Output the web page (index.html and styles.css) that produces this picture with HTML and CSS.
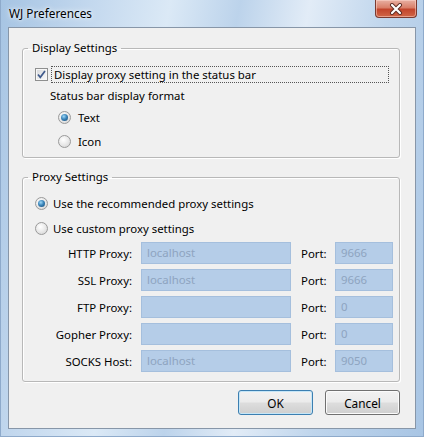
FILE: index.html
```html
<!DOCTYPE html>
<html>
<head>
<meta charset="utf-8">
<title>WJ Preferences</title>
<link rel="stylesheet" href="styles.css">
</head>
<body>
<div class="window">
  <div class="titlebar">
    <span class="title">WJ Preferences</span>
    <div class="close">
      <svg width="14" height="12" viewBox="0 0 14 12">
        <path d="M3 2 L11 10 M11 2 L3 10" stroke="#5b2a22" stroke-width="4" stroke-linecap="round"/>
        <path d="M3 2 L11 10 M11 2 L3 10" stroke="#ffffff" stroke-width="2.2" stroke-linecap="round"/>
      </svg>
    </div>
  </div>
  <div class="client">
    <fieldset class="group group-display">
      <legend>Display Settings</legend>
      <div class="check-row">
        <span class="checkbox">
          <svg width="11" height="11" viewBox="0 0 11 11"><path d="M2 5.5 L4.3 8.3 L9 2" fill="none" stroke="#3f5a8c" stroke-width="1.7"/></svg>
        </span>
        <span class="focus-label">Display proxy setting in the status bar</span>
      </div>
      <div class="sub-label">Status bar display format</div>
      <div class="radio-row indent"><span class="radio on"></span><span>Text</span></div>
      <div class="radio-row indent"><span class="radio"></span><span>Icon</span></div>
    </fieldset>
    <fieldset class="group group-proxy">
      <legend>Proxy Settings</legend>
      <div class="radio-row first"><span class="radio on"></span><span>Use the recommended proxy settings</span></div>
      <div class="radio-row"><span class="radio"></span><span>Use custom proxy settings</span></div>
      <div class="proxy-grid">
        <span class="lbl">HTTP Proxy:</span><div class="field">localhost</div><span class="port-lbl">Port:</span><div class="field">9666</div>
        <span class="lbl">SSL Proxy:</span><div class="field">localhost</div><span class="port-lbl">Port:</span><div class="field">9666</div>
        <span class="lbl">FTP Proxy:</span><div class="field"></div><span class="port-lbl">Port:</span><div class="field">0</div>
        <span class="lbl">Gopher Proxy:</span><div class="field"></div><span class="port-lbl">Port:</span><div class="field">0</div>
        <span class="lbl">SOCKS Host:</span><div class="field">localhost</div><span class="port-lbl">Port:</span><div class="field">9050</div>
      </div>
    </fieldset>
    <div class="buttons">
      <button class="btn default">OK</button>
      <button class="btn">Cancel</button>
    </div>
  </div>
</div>
</body>
</html>
```
FILE: styles.css
```css
* { box-sizing: border-box; }
html, body { margin: 0; padding: 0; }
body {
  font-family: "Noto Sans", "Open Sans", sans-serif;
  font-size: 11.4px;
  color: #000;
  background: #fff;
}
.window {
  width: 424px;
  height: 437px;
  display: flex;
  flex-direction: column;
  padding: 0 7px 7px 7px;
  background: linear-gradient(100deg, #a6c4e3 0%, #c3d8ee 18%, #dbe9f6 34%, #bcd3eb 48%, #e2ecf7 62%, #bfd5ec 78%, #a8c5e4 100%);
  border-left: 1px solid #8eaacb;
  border-right: 1px solid #8eaacb;
  border-bottom: 1px solid #8eaacb;
  position: relative;
}
.titlebar {
  height: 27px;
  display: flex;
  align-items: center;
  flex-shrink: 0;
}
.title {
  margin-left: 1px;
  margin-top: -1px;
  line-height: 16px;
  font-size: 11.8px;
  text-shadow: 0 0 6px #eef5fc, 0 0 3px #f4f8fd;
}
.close {
  position: absolute;
  top: 0;
  left: 374px;
  width: 42px;
  height: 18px;
  border: 1px solid #7a3a30;
  border-top: none;
  border-radius: 0 0 4px 4px;
  background: linear-gradient(#e8b0a2 0%, #d97f69 45%, #c2452c 55%, #d06647 100%);
  box-shadow: inset 0 0 0 1px rgba(255,220,210,0.5);
  display: flex;
  align-items: center;
  justify-content: center;
}
.client {
  flex: 1;
  background: #f0f0f0;
  border: 1px solid #8796a8;
  display: flex;
  flex-direction: column;
}
.group {
  margin: 0;
  padding: 0;
  border: 1px solid #b8b8b8;
  border-radius: 3px;
  box-shadow: inset 1px 1px 0 #fff, 1px 1px 0 #fff;
  min-width: 0;
}
.group legend {
  margin-left: 5px;
  padding: 0 4px 0 4px;
  line-height: 16px;
}
.group-display {
  margin: 12px 15px 0 13px;
  padding-bottom: 8px;
}
.group-proxy {
  margin: 11px 15px 0 13px;
  padding-bottom: 9px;
}
.check-row {
  display: flex;
  align-items: center;
  margin: 10px 10px 0 12px;
  height: 17px;
}
.checkbox {
  width: 13px;
  height: 13px;
  border: 1px solid #8e8f8f;
  background: linear-gradient(135deg, #d6d8db, #fbfbfb);
  box-shadow: inset 0 0 0 1px #f7f7f7;
  display: flex;
  align-items: center;
  justify-content: center;
  flex-shrink: 0;
}
.focus-label {
  flex: 1;
  margin-left: 3px;
  height: 17px;
  line-height: 15px;
  padding-left: 2px;
  border: 1px dotted #555;
}
.sub-label {
  margin: 5px 0 0 27px;
  line-height: 16px;
}
.radio-row {
  display: flex;
  align-items: center;
  gap: 5px;
  height: 16px;
  margin: 5px 0 0 12px;
}
.radio-row.indent {
  margin-left: 35px;
  gap: 7px;
}
.radio-row.indent + .radio-row.indent { margin-top: 8px; }
.radio-row.first { margin-top: 10px; }
.group-proxy .radio-row + .radio-row { margin-top: 9px; }
.radio {
  width: 13px;
  height: 13px;
  border-radius: 50%;
  border: 1px solid #9a9a9a;
  background: radial-gradient(circle at 40% 35%, #ffffff 0%, #e9e9e9 50%, #cfcfcf 100%);
  display: flex;
  align-items: center;
  justify-content: center;
  flex-shrink: 0;
}
.radio.on::after {
  content: "";
  width: 7px;
  height: 7px;
  border-radius: 50%;
  background: radial-gradient(circle at 40% 35%, #9fd8f7 0%, #3c86bb 45%, #13446e 100%);
}
.proxy-grid {
  display: grid;
  grid-template-columns: 109px 150px 27px 57px;
  column-gap: 9px;
  row-gap: 5px;
  grid-auto-rows: 22px;
  margin: 6px 0 0 0;
  align-items: center;
}
.proxy-grid .lbl {
  text-align: right;
}
.proxy-grid .port-lbl {
  margin-left: 1px;
}
.proxy-grid .field:nth-child(4n) {
  margin-left: -1px;
}
.field {
  height: 22px;
  background: #b5cde8;
  border: 1px solid #a5bfdd;
  color: #8ea4c0;
  padding: 0 5px;
  line-height: 20px;
}
.buttons {
  display: flex;
  justify-content: flex-end;
  gap: 12px;
  margin: 8px 15px 0 0;
}
.btn {
  width: 75px;
  height: 25px;
  font-family: "Noto Sans", "Open Sans", sans-serif;
  font-size: 11.8px;
  color: #000;
  border: 1px solid #707070;
  border-radius: 3px;
  background: linear-gradient(#f2f2f2 0%, #ebebeb 48%, #dddddd 52%, #cfcfcf 100%);
  box-shadow: inset 0 0 0 1px #fbfbfb;
  padding: 0;
}
.btn.default {
  border-color: #3c7fb1;
  box-shadow: inset 0 0 0 1px #c6e6f7;
}
```
